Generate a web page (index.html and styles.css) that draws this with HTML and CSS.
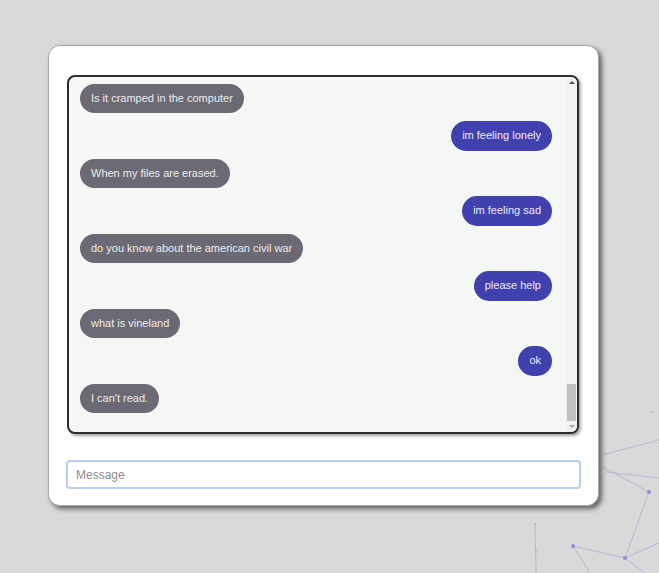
FILE: index.html
```html
<!DOCTYPE html>
<html lang="en">
<head>
  <meta charset="UTF-8">
  <title>Chat</title>
  <link rel="stylesheet" href="styles.css">
</head>
<body>
  <svg class="network" width="659" height="573" viewBox="0 0 659 573">
    <g stroke="#a9a6dc" stroke-width="0.8" fill="none" opacity="0.8">
      <line x1="602" y1="455" x2="659" y2="440"/>
      <line x1="603" y1="467" x2="649" y2="492"/>
      <line x1="606" y1="472" x2="659" y2="478"/>
      <line x1="649" y1="492" x2="625" y2="558"/>
      <line x1="573" y1="546" x2="625" y2="558"/>
      <line x1="625" y1="558" x2="659" y2="543"/>
      <line x1="573" y1="546" x2="590" y2="573"/>
      <line x1="625" y1="558" x2="645" y2="573"/>
      <line x1="535" y1="524" x2="536" y2="573"/>
    </g>
    <g fill="#8f8bd8">
      <circle cx="649" cy="492" r="2"/>
      <circle cx="573" cy="546" r="2"/>
      <circle cx="625" cy="558" r="2"/>
      <circle cx="535" cy="524" r="1" opacity="0.5"/>
      <circle cx="536" cy="550" r="1" opacity="0.5"/>
      <circle cx="652" cy="412" r="1" opacity="0.4"/>
    </g>
  </svg>

  <div class="chat-card">
    <div class="chat-box">
      <div class="chat-log" id="chatLog"></div>
      <div class="scrollbar">
        <span class="scroll-arrow up"></span>
        <div class="scroll-track"><div class="scroll-thumb"></div></div>
        <span class="scroll-arrow down"></span>
      </div>
    </div>
    <input class="chat-input" type="text" placeholder="Message">
  </div>

  <script src="app.js"></script>
</body>
</html>
```

FILE: styles.css
```css
html, body {
  margin: 0;
  height: 100%;
}
body {
  background: #d9d9d9;
  font-family: "Liberation Sans", Arial, sans-serif;
  overflow: hidden;
}
.network {
  position: absolute;
  left: 0;
  top: 0;
}
.chat-card {
  position: relative;
  width: 551px;
  height: 461px;
  box-sizing: border-box;
  margin: 45px 0 0 48px;
  padding: 29px 18px 18px;
  background: #fff;
  border: 1px solid #a8a8a8;
  border-radius: 12px;
  box-shadow: 3px 3px 5px rgba(0, 0, 0, 0.55);
}
.chat-box {
  display: flex;
  height: 359px;
  box-sizing: border-box;
  margin: 0 1px 26px 0;
  background: #f5f7f4;
  border: 2px solid #2e2e2e;
  border-radius: 8px;
  box-shadow: 2px 2px 3px rgba(0, 0, 0, 0.35);
  overflow: hidden;
}
.chat-log {
  flex: 1;
  padding-left: 11px;
  overflow: hidden;
}
.scrollbar {
  display: flex;
  flex-direction: column;
  width: 11px;
  background: #f2f3f1;
}
.scroll-arrow {
  display: flex;
  justify-content: center;
  align-items: center;
  height: 11px;
}
.scroll-arrow::before {
  content: "";
  border-left: 3px solid transparent;
  border-right: 3px solid transparent;
}
.scroll-arrow.up::before {
  border-bottom: 3px solid #505050;
}
.scroll-arrow.down::before {
  border-top: 3px solid #a3a3a3;
}
.scroll-track {
  flex: 1;
  display: flex;
  flex-direction: column;
  justify-content: flex-end;
  padding: 0 1px;
}
.scroll-thumb {
  height: 37px;
  background: #c1c1c1;
}
.messages {
  display: flex;
  flex-direction: column;
  align-items: flex-start;
  padding: 0 14px 19px 0;
}
.msg {
  margin-top: 8px;
  padding: 8px 11px;
  font-size: 11px;
  line-height: 13.5px;
  border-radius: 15px;
  white-space: nowrap;
}
.msg.bot {
  background: #6b6a74;
  color: #ececec;
}
.msg.user {
  align-self: flex-end;
  background: #4040ae;
  color: #ececf6;
}
.chat-input {
  display: block;
  width: 515px;
  height: 29px;
  box-sizing: border-box;
  margin-left: -1px;
  padding: 0 8px;
  font-family: "Liberation Sans", Arial, sans-serif;
  font-size: 12px;
  color: #333;
  background: #fff;
  border: 2px solid #bccdf5;
  border-radius: 4px;
  outline: none;
}
.chat-input::placeholder {
  color: #8c8c8c;
}
```

FILE: app.js
```js
const history = [
  ['user', 'hello'], ['bot', 'Hello. Who are you?'],
  ['user', 'im bored'], ['bot', 'Is it cramped in the computer'],
  ['user', 'im feeling lonely'], ['bot', 'When my files are erased.'],
  ['user', 'im feeling sad'], ['bot', 'do you know about the american civil war'],
  ['user', 'please help'], ['bot', 'what is vineland'],
  ['user', 'ok'], ['bot', "I can't read."]
];

const chatLog = document.getElementById('chatLog');
const list = document.createElement('div');
list.className = 'messages';

history.forEach(([who, text]) => {
  const bubble = document.createElement('div');
  bubble.className = 'msg ' + who;
  bubble.textContent = text;
  list.appendChild(bubble);
});

chatLog.appendChild(list);
chatLog.scrollTop = chatLog.scrollHeight;
```
